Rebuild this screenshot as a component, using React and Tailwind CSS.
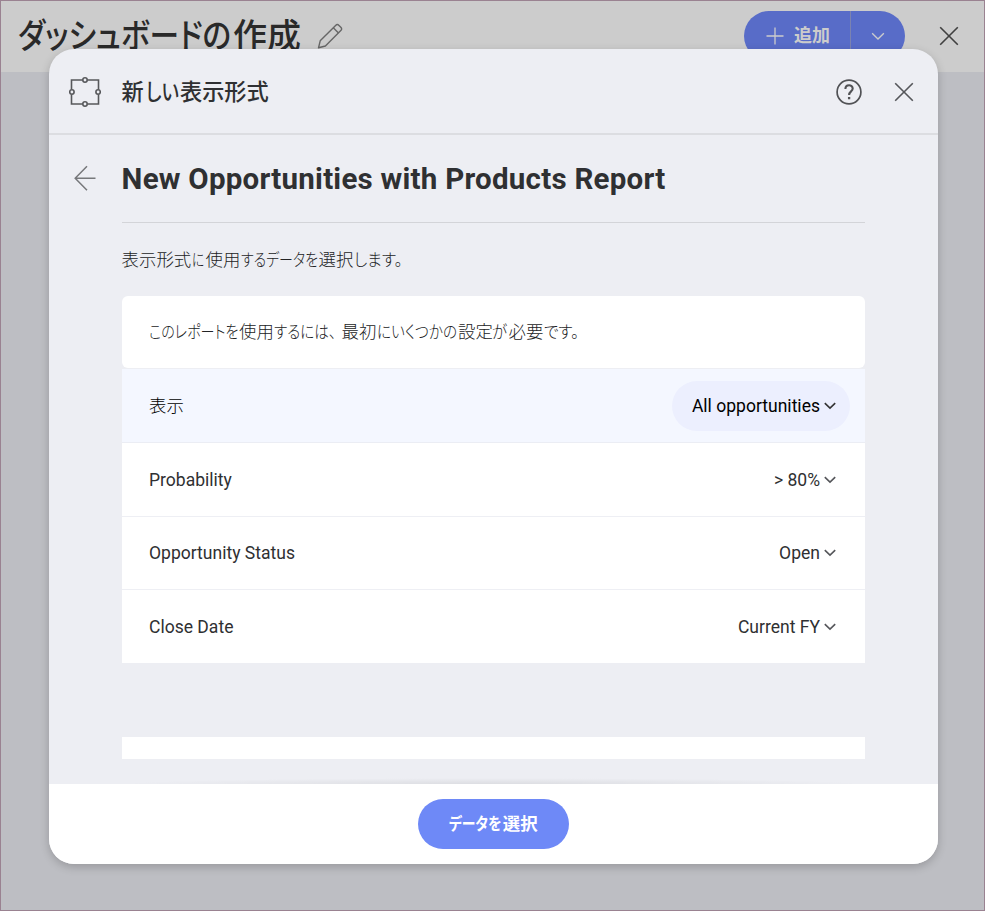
import React, { useLayoutEffect, useRef } from "react";

// A run of proportional kana, condensed horizontally to the given width.
function Fitted({ text, width }) {
  const ref = useRef(null);
  useLayoutEffect(() => {
    const el = ref.current;
    el.style.transform = `scaleX(${width / el.offsetWidth})`;
  }, [text, width]);
  return (
    <span ref={ref} className="block w-max origin-left [font-feature-settings:'palt']">
      {text}
    </span>
  );
}

// Each part: [text, box width, fitted text width (optional)].
function Runs({ parts }) {
  return (
    <span className="inline-flex whitespace-nowrap">
      {parts.map(([text, width, fit], i) => (
        <span key={i} className="block shrink-0" style={{ width }}>
          {fit ? <Fitted text={text} width={fit} /> : text}
        </span>
      ))}
    </span>
  );
}

function Chevron({ className, strokeWidth = 1.6 }) {
  return (
    <svg viewBox="0 0 12 8" className={className} fill="none" stroke="currentColor" strokeWidth={strokeWidth}>
      <path d="M0.8 1.2 6 6.2 11.2 1.2" />
    </svg>
  );
}

function Close({ className }) {
  return (
    <svg viewBox="0 0 20 20" className={className} fill="none" stroke="currentColor" strokeWidth="1.6">
      <path d="M1.2 1.2 18.8 18.8M18.8 1.2 1.2 18.8" />
    </svg>
  );
}

const rows = [
  ["Probability", "> 80%"],
  ["Opportunity Status", "Open"],
  ["Close Date", "Current FY"],
];

export default function App() {
  return (
    <div className="relative h-[911px] w-[985px] overflow-hidden border border-[#9a8291] bg-[#bdbec3] font-[Roboto,'Noto_Sans_CJK_JP',sans-serif] text-[#2f3032]">
      <header className="flex h-[71px] items-start bg-[#cccccc]">
        <h1 className="ml-[17px] mt-[10px] w-[284px] text-[34px] font-medium leading-[50px] text-[#292929]">
          <Runs parts={[["ダッシュボードの", 215, 213], ["作成", 68]]} />
        </h1>
        <svg viewBox="0 0 26 26" className="ml-[15px] mr-px mt-[22px] size-[26px] text-[#666]" fill="none" stroke="currentColor" strokeWidth="1.4" strokeLinejoin="round">
          <path d="M1.5 24.8 3.2 17.8 18.6 2.4Q20.3.7 22 2.4L23.8 4.2Q25.5 5.9 23.8 7.6L8.4 23Z" />
          <path d="M16.3 4.7 21.5 9.9" />
        </svg>
        <div className="ml-[400px] mt-[10px] flex h-[50px] w-[161px] rounded-full bg-[#586cc8] text-[#cccccc]">
          <div className="flex w-[107px] items-center border-r border-[#7b83b0] pl-[22px]">
            <svg viewBox="0 0 18 18" className="size-[18px]" fill="none" stroke="currentColor" strokeWidth="1.3">
              <path d="M9 .5V17.5M.5 9H17.5" />
            </svg>
            <span className="ml-[10px] text-[18px] font-bold leading-6">追加</span>
          </div>
          <div className="flex flex-1 items-center justify-center">
            <Chevron className="h-[9px] w-[14px]" strokeWidth={1.2} />
          </div>
        </div>
        <Close className="ml-[34px] mt-[25px] size-5 text-[#404040]" />
      </header>

      <section className="absolute left-[48px] top-[48px] flex h-[815px] w-[889px] flex-col overflow-hidden rounded-[25px] bg-[#edeef3] shadow-[0_3px_10px_rgba(0,0,0,0.2)]">
        <div className="flex h-[86px] shrink-0 items-center border-b-2 border-[#dcdde1] pl-5">
          <svg viewBox="0 0 32 30" className="mt-[2px] h-[30px] w-[32px] text-[#57585b]" fill="none" stroke="currentColor" strokeWidth="1.6">
            <path d="M13.5 3H2.5V12.5M2.5 17.5V27H13.5M18.5 27H29.5V17.5M29.5 12.5V3H18.5" />
            <circle cx="16" cy="3" r="2.2" />
            <circle cx="16" cy="27" r="2.2" />
            <circle cx="2.9" cy="15" r="2.2" />
            <circle cx="29.1" cy="15" r="2.2" />
          </svg>
          <h2 className="ml-[20.5px] mt-[2px] w-[160.5px] text-[22.2px] font-medium leading-8">
            <Runs parts={[["新", 24], ["しい", 34.5, 33], ["表示形式", 90]]} />
          </h2>
          <svg viewBox="0 0 26 26" className="ml-[554px] mt-[2px] size-[26px] text-[#515255]" fill="none" stroke="currentColor">
            <circle cx="13" cy="13" r="11.9" strokeWidth="1.7" />
            <path d="M9.4 10C9.4 5.1 16.7 5.2 16.7 9.6C16.7 12.3 13.1 12.5 13.1 15.9" strokeWidth="2.1" />
            <path d="M13.1 18V20.3" strokeWidth="2.3" />
          </svg>
          <Close className="ml-[32px] mt-[2px] size-5 text-[#55565a]" />
        </div>

        <div className="flex h-[649px] shrink-0 pl-[24.5px]">
          <svg viewBox="0 0 22 26" className="mt-[30px] h-[26px] w-[22px] text-[#77787b]" fill="none" stroke="currentColor" strokeWidth="1.5">
            <path d="M21.5 13.3H1.2M13 1.3 1.2 13.3 13 25.3" />
          </svg>
          <div className="ml-[26.1px] flex w-[743.4px] flex-col">
            <div className="flex h-[88px] items-center border-b border-[#d3d4d8]">
              <h3 className="mt-px whitespace-nowrap text-[29.5px] font-bold leading-9 tracking-[0.25px]">New Opportunities with Products Report</h3>
            </div>
            <p className="mt-[23px] h-[28px] text-[17.4px] font-light leading-[28px] text-[#222325]">
              <Runs parts={[["表示形式", 70.5], ["に", 13.5, 12.5], ["使用", 35.5], ["するデータを", 77.5, 77], ["選択", 35], ["します。", 50, 48]]} />
            </p>
            <div className="mt-[22px] flex h-[72px] items-center rounded-md bg-white pl-[27.4px] text-[17.4px] font-light text-[#222325]">
              <Runs parts={[["このレポートを", 90, 89], ["使用", 35], ["するには、", 67.5, 62], ["最初", 35.5], ["にいくつかの", 81, 80], ["設定", 34.5], ["が", 16, 15], ["必要", 35.5], ["です。", 39, 35]]} />
            </div>
            <div className="mt-px flex h-[74px] items-center justify-between border-b border-[#ebedf4] bg-[#f4f7ff] pl-[27.4px] pr-[15px] text-black">
              <span className="pt-px text-[17.4px] font-light">表示</span>
              <div className="flex h-[50px] w-[178px] items-center justify-end rounded-full bg-[#eceffe] pr-[14px]">
                <span className="pt-px text-[17.55px]">All opportunities</span>
                <Chevron className="ml-1 h-2 w-3 text-[#333]" />
              </div>
            </div>
            <div className="flex flex-col bg-[#eeeff4]">
              {rows.map(([label, value]) => (
                <div key={label} className="mb-px flex h-[72.6px] shrink-0 items-center justify-between bg-white pl-[27.4px] pr-[29px] pt-px text-[17.55px] last:mb-0">
                  <span>{label}</span>
                  <span className="flex items-center">
                    {value}
                    <Chevron className="ml-1 h-2 w-3 text-[#55565a]" />
                  </span>
                </div>
              ))}
            </div>
            <div className="mt-[74.2px] h-[22px] shrink-0 bg-white" />
          </div>
        </div>

        <footer className="relative flex flex-1 items-center justify-center bg-white">
          <div className="absolute inset-x-[70px] -top-[6px] h-[6px] bg-[radial-gradient(ellipse_at_bottom,rgba(0,0,0,0.07),transparent_70%)]" />
          <button className="flex h-[50px] w-[151px] items-center justify-center rounded-full bg-[#6e89f7] text-[17.4px] font-bold text-white">
            <Runs parts={[["データを", 53.5, 52.5], ["選択", 35]]} />
          </button>
        </footer>
      </section>
    </div>
  );
}
